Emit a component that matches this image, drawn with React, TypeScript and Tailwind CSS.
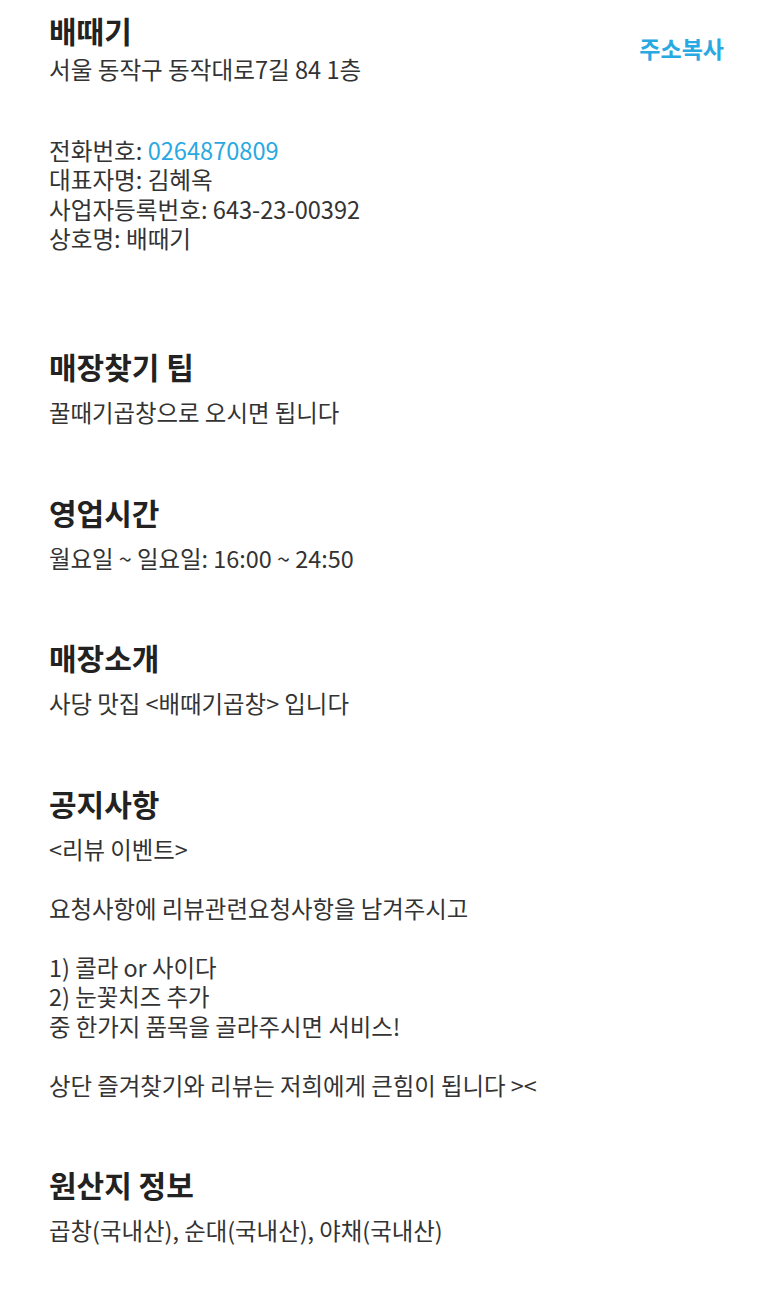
const font = '"Noto Sans CJK KR", "Noto Sans", sans-serif';

function Section({ title, children, first }: { title: string; children: React.ReactNode; first?: boolean }) {
  return (
    <section className={first ? 'mt-[93px]' : 'mt-[64px]'}>
      <h2 className="text-[30px] leading-[40px] font-bold text-[#222]">{title}</h2>
      <div className="mt-[12px] text-[23.4px] leading-[29.5px] text-[#333] whitespace-pre-line">{children}</div>
    </section>
  );
}

export default function App() {
  return (
    <div className="min-h-[1290px] bg-white px-[49px] pt-[12px]" style={{ fontFamily: font }}>
      <div className="flex items-center justify-between">
        <div>
          <h1 className="text-[30px] leading-[36px] font-bold text-[#222]">배때기</h1>
          <p className="mt-[7px] text-[23.6px] leading-[29px] text-[#333]">서울 동작구 동작대로7길 84 1층</p>
        </div>
        <button className="text-[23px] font-bold text-[#29a9e1]">주소복사</button>
      </div>

      <div className="mt-[52px] text-[23.6px] leading-[29.3px] text-[#333]">
        <p>
          전화번호: <span className="text-[#29a9e1]">0264870809</span>
        </p>
        <p>대표자명: 김혜옥</p>
        <p>사업자등록번호: 643-23-00392</p>
        <p>상호명: 배때기</p>
      </div>

      <Section title="매장찾기 팁" first>꿀때기곱창으로 오시면 됩니다</Section>
      <Section title="영업시간">월요일 ~ 일요일: 16:00 ~ 24:50</Section>
      <Section title="매장소개">사당 맛집 &lt;배때기곱창&gt; 입니다</Section>
      <Section title="공지사항">
        {'<리뷰 이벤트>\n\n요청사항에 리뷰관련요청사항을 남겨주시고\n\n1) 콜라 or 사이다\n2) 눈꽃치즈 추가\n중 한가지 품목을 골라주시면 서비스!\n\n상단 즐겨찾기와 리뷰는 저희에게 큰힘이 됩니다 ><'}
      </Section>
      <Section title="원산지 정보">곱창(국내산), 순대(국내산), 야채(국내산)</Section>
    </div>
  );
}
